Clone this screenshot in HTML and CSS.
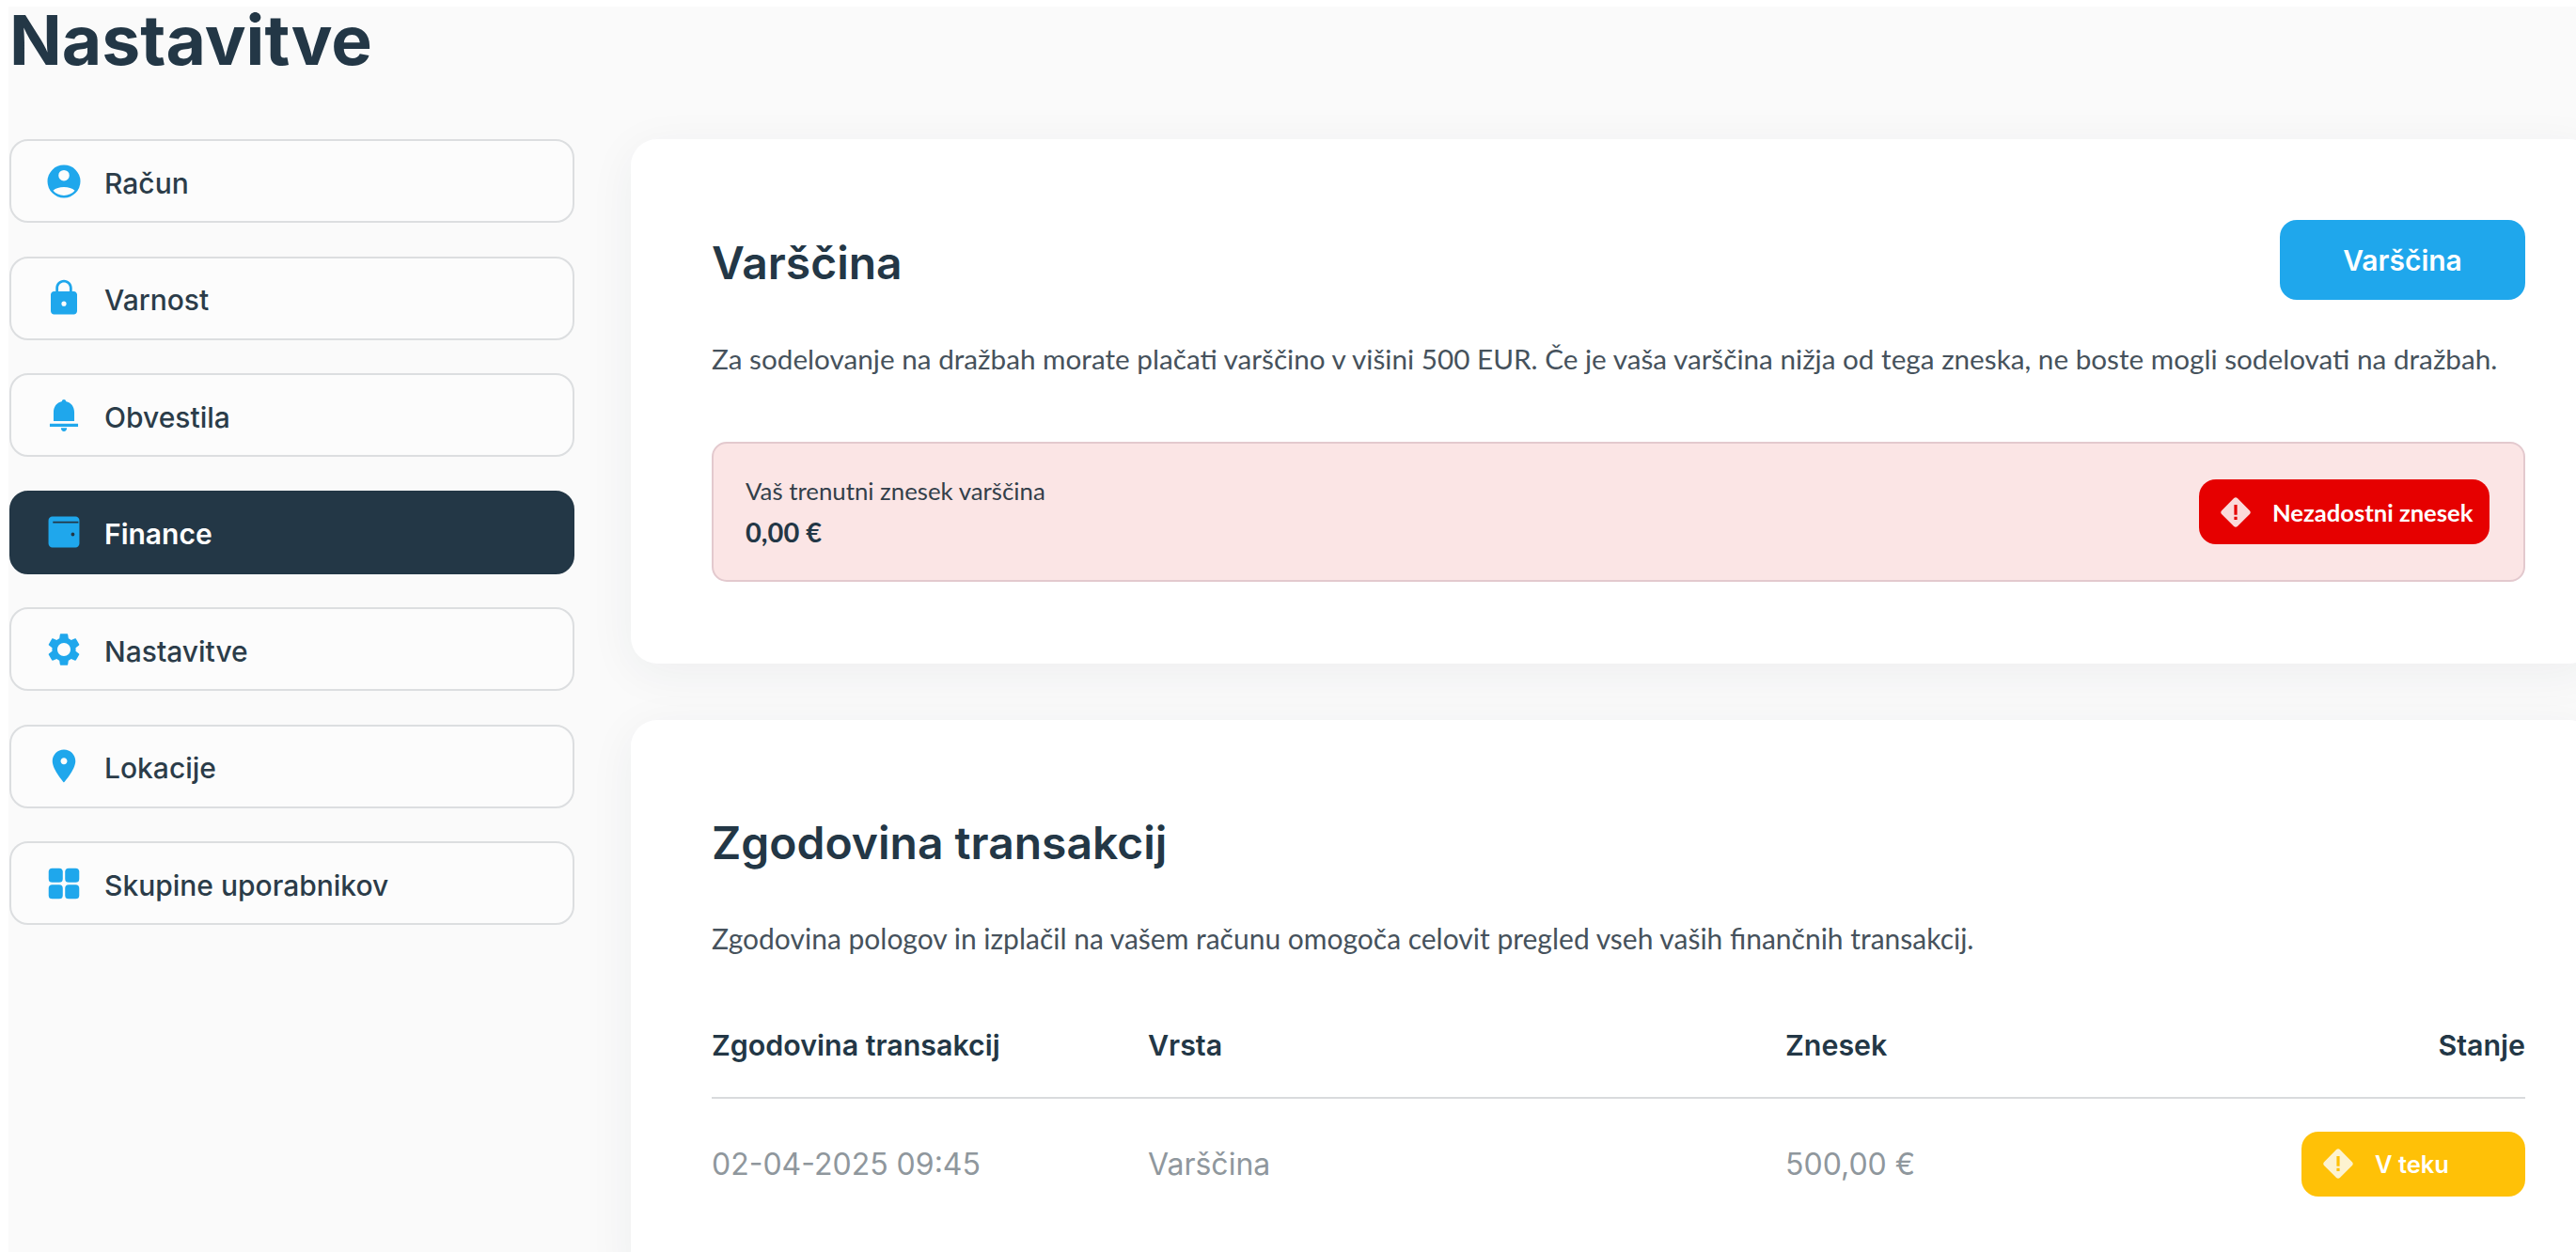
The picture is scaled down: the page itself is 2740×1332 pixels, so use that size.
FILE: index.html
```html
<!DOCTYPE html>
<html lang="sl">
<head>
<meta charset="utf-8">
<title>Nastavitve</title>
<link rel="stylesheet" href="styles.css">
</head>
<body>
<div class="page">
  <h1 class="page-title">Nastavitve</h1>
  <div class="layout">
    <nav class="side">
      <a class="side-item"><svg class="side-icon" viewBox="0 0 24 24"><path fill-rule="evenodd" d="M12 2a10 10 0 1 0 0 20a10 10 0 0 0 0-20zM12 5.100a3.300 3.300 0 1 1 0 6.600a3.300 3.300 0 0 1 0-6.600zM5.400 17.600C7 16 9.300 15.400 12 15.400s5 .6 6.600 2.200C17 19.500 14.600 20.500 12 20.500s-5-1-6.600-2.900z"/></svg>Račun</a>
      <a class="side-item"><svg class="side-icon" viewBox="0 0 24 24"><path d="M18 8h-1V6c0-2.760-2.240-5-5-5S7 3.240 7 6v2H6c-1.100 0-2 .9-2 2v10c0 1.100.9 2 2 2h12c1.100 0 2-.9 2-2V10c0-1.100-.9-2-2-2zm-6 9c-.9 0-1.500-.6-1.500-1.500S11.100 14 12 14s1.500.6 1.500 1.500S12.900 17 12 17zm3.400-9H8.600V6c0-1.880 1.520-3.400 3.400-3.400 1.880 0 3.400 1.520 3.400 3.400v2z"/></svg>Varnost</a>
      <a class="side-item"><svg class="side-icon" viewBox="0 0 24 24"><path d="M12 2.300c.7 0 1.200.5 1.200 1.100C16.400 4.200 18.300 6.600 18.300 10v5.400H5.700V10c0-3.400 1.900-5.800 5.100-6.600 0-.6.5-1.100 1.200-1.100zM3.400 17h17.200v1.900H3.400zM10.200 19.600h3.600c0 1.200-.8 2.100-1.800 2.100s-1.800-.9-1.800-2.100z"/></svg>Obvestila</a>
      <a class="side-item side-item-active"><svg class="side-icon" viewBox="0 0 24 24"><path fill-rule="evenodd" d="M5 2.600h14a2.400 2.400 0 0 1 2.400 2.400v14a2.400 2.400 0 0 1-2.400 2.400H5a2.400 2.400 0 0 1-2.400-2.400V5A2.400 2.400 0 0 1 5 2.600zM5.300 5.500v1.100h15.500V5.500zM17.400 12.300a1.100 1.100 0 1 0 0 2.200a1.100 1.100 0 0 0 0-2.200z"/></svg>Finance</a>
      <a class="side-item"><svg class="side-icon" viewBox="0 0 24 24"><path fill-rule="evenodd" d="M19.140 12.940c.04-.3.06-.61.06-.94 0-.32-.02-.64-.07-.94l2.030-1.580c.18-.14.23-.41.12-.61l-1.920-3.320c-.12-.22-.37-.29-.59-.22l-2.390.96c-.5-.38-1.030-.7-1.620-.94l-.36-2.540c-.04-.24-.24-.41-.48-.41h-3.840c-.24 0-.43.17-.47.41l-.36 2.540c-.59.24-1.130.57-1.620.94l-2.390-.96c-.22-.08-.47 0-.59.22L2.740 8.870c-.12.21-.08.47.12.61l2.030 1.580c-.05.3-.09.63-.09.94s.02.64.07.94l-2.030 1.580c-.18.14-.23.41-.12.61l1.920 3.320c.12.22.37.29.59.22l2.390-.96c.5.38 1.030.7 1.620.94l.36 2.540c.05.24.24.41.48.41h3.840c.24 0 .44-.17.47-.41l.36-2.540c.59-.24 1.130-.56 1.620-.94l2.390.96c.22.08.47 0 .59-.22l1.920-3.320c.12-.22.07-.47-.12-.61l-2.010-1.580zM12 16c-2.200 0-4-1.800-4-4s1.800-4 4-4 4 1.800 4 4-1.800 4-4 4z"/></svg>Nastavitve</a>
      <a class="side-item"><svg class="side-icon" viewBox="0 0 24 24"><path fill-rule="evenodd" d="M12 2C8.130 2 5 5.130 5 9c0 5.250 7 13 7 13s7-7.750 7-13c0-3.870-3.130-7-7-7zm0 9c-1.100 0-2-.9-2-2s.9-2 2-2 2 .9 2 2-.9 2-2 2z"/></svg>Lokacije</a>
      <a class="side-item"><svg class="side-icon" viewBox="0 0 24 24"><rect x="2.700" y="2.700" width="8.600" height="8.600" rx="2.200"/><rect x="12.700" y="2.700" width="8.600" height="8.600" rx="2.200"/><rect x="2.700" y="12.700" width="8.600" height="8.600" rx="2.200"/><rect x="12.700" y="12.700" width="8.600" height="8.600" rx="2.200"/></svg>Skupine uporabnikov</a>
    </nav>
    <main class="content">
      <section class="card card-deposit">
        <div class="card-head">
          <h2 class="card-title">Varščina</h2>
          <button class="btn-primary">Varščina</button>
        </div>
        <p class="card-text">Za sodelovanje na dražbah morate plačati varščino v višini 500 EUR. Če je vaša varščina nižja od tega zneska, ne boste mogli sodelovati na dražbah.</p>
        <div class="alert">
          <div class="alert-info">
            <div class="alert-label">Vaš trenutni znesek varščina</div>
            <div class="alert-value">0,00 €</div>
          </div>
          <div class="badge badge-red"><svg class="badge-icon" viewBox="0 0 32 32"><path fill-rule="evenodd" d="M14 2.200a2.800 2.800 0 0 1 4 0L29.800 14a2.800 2.800 0 0 1 0 4L18 29.800a2.800 2.800 0 0 1-4 0L2.200 18a2.800 2.800 0 0 1 0-4zM14.500 8.500v10h3v-10zM14.500 20.500v3h3v-3z"/></svg>Nezadostni znesek</div>
        </div>
      </section>
      <section class="card card-history">
        <h2 class="card-title">Zgodovina transakcij</h2>
        <p class="card-text history-text">Zgodovina pologov in izplačil na vašem računu omogoča celovit pregled vseh vaših finančnih transakcij.</p>
        <div class="table-row table-head">
          <div>Zgodovina transakcij</div>
          <div>Vrsta</div>
          <div>Znesek</div>
          <div class="cell-end">Stanje</div>
        </div>
        <div class="table-row table-body">
          <div>02-04-2025 09:45</div>
          <div>Varščina</div>
          <div>500,00 €</div>
          <div class="cell-end"><div class="badge badge-yellow"><svg class="badge-icon" viewBox="0 0 32 32"><path fill-rule="evenodd" d="M14 2.200a2.800 2.800 0 0 1 4 0L29.800 14a2.800 2.800 0 0 1 0 4L18 29.800a2.800 2.800 0 0 1-4 0L2.200 18a2.800 2.800 0 0 1 0-4zM14.500 8.500v10h3v-10zM14.500 20.500v3h3v-3z"/></svg>V teku</div></div>
        </div>
      </section>
    </main>
  </div>
</div>
</body>
</html>
```
FILE: styles.css
```css
* { box-sizing: border-box; }
html, body { margin: 0; padding: 0; background: #fff; height: 100%; overflow: hidden; }
body { font-family: "Inter", "Liberation Sans", sans-serif; color: #233746; }
.page { margin: 7px 0 0 9px; height: 1325px; background: #fafafa; padding-left: 1px; }
.page-title { margin: 0; height: 141px; font-size: 73.2px; line-height: 72px; font-weight: 700; color: #233746; }
.layout { display: flex; gap: 60px; align-items: flex-start; }
.side { width: 601px; flex: none; display: flex; flex-direction: column; gap: 35.5px; }
.side-item { height: 89px; display: flex; align-items: center; padding: 4px 0 0 35px; gap: 22px; border: 2px solid #dcdee0; border-radius: 20px; font-size: 30px; font-weight: 500; color: #2b3c49; background: #fcfcfc; }
.side-item-active { background: #233746; border-color: #233746; color: #fff; font-weight: 600; }
.side-icon { width: 42px; height: 42px; flex: none; fill: #1fa7ec; margin-bottom: 4px; }
.content { width: 2090px; flex: none; display: flex; flex-direction: column; gap: 60px; }
.card { background: #fff; border-radius: 28px; padding: 0 75px 0 86px; box-shadow: 0 10px 50px rgba(35, 55, 70, .06); }
.card-deposit { height: 558px; padding-top: 86px; }
.card-history { height: 600px; padding-top: 103px; }
.card-head { display: flex; align-items: center; justify-content: space-between; height: 85px; }
.card-head .card-title { margin-top: 6px; }
.card-title { margin: 0; font-size: 48px; line-height: 56px; font-weight: 600; color: #233746; }
.btn-primary { width: 261px; height: 85px; border: 0; border-radius: 18px; background: #1fa7ec; color: #fff; font: 600 30px "Inter", sans-serif; }
.card-text { margin: 43px 0 0; font-family: "Lato", sans-serif; font-size: 29.7px; line-height: 40px; color: #46525c; }
.alert { margin-top: 68px; height: 149px; display: flex; align-items: center; justify-content: space-between; padding: 0 36px 0 34px; background: #fbe5e5; border: 2px solid #e3c9ce; border-radius: 16px; }
.alert-label { font-family: "Lato", sans-serif; font-size: 25.8px; line-height: 32px; color: #333f4a; }
.alert-value { margin-top: 10px; font-family: "Lato", sans-serif; font-size: 29px; line-height: 36px; font-weight: 700; color: #233746; }
.badge { display: flex; align-items: center; height: 69px; border-radius: 18px; color: #fff; gap: 22px; padding-left: 22px; }
.badge-red { width: 309px; background: #e60000; font-family: "Lato", sans-serif; font-size: 25.6px; font-weight: 700; }
.badge-yellow { width: 238px; background: #ffc107; font-family: "Inter", sans-serif; font-size: 25.5px; font-weight: 600; }
.badge-icon { width: 34px; height: 34px; flex: none; }
.badge-red .badge-icon { fill: #fbdada; }
.badge-yellow .badge-icon { fill: #fdf3d0; }
.card-text.history-text { margin-top: 53px; font-size: 30px; }
.table-row { display: grid; grid-template-columns: 464px 678px 1fr auto; align-items: center; }
.table-head { margin-top: 48px; height: 103px; padding-bottom: 9px; border-bottom: 2px solid #d9dbdd; font-size: 30.4px; font-weight: 600; color: #233746; }
.table-body { height: 138px; font-size: 32px; color: #8f979d; }
.cell-end { justify-self: end; }
```
